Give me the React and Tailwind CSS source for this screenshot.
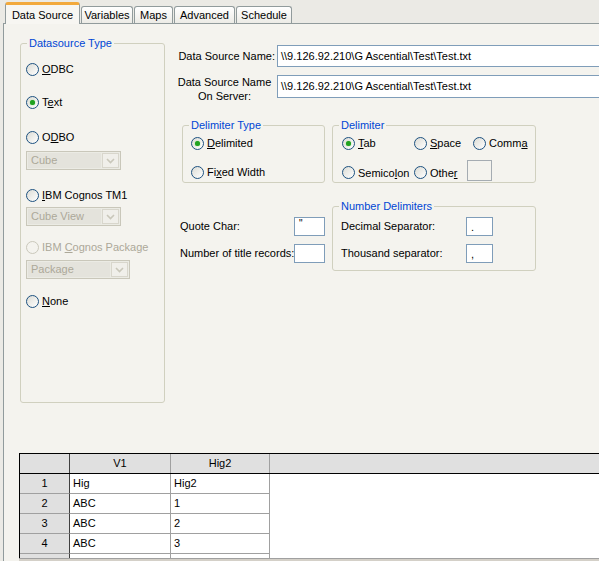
import React from "react";

function Radio({ checked, disabled }) {
  return (
    <span
      className={
        disabled
          ? "inline-flex w-[13px] h-[13px] rounded-full border border-[#cac8bb] bg-[#f4f3ee] items-center justify-center shrink-0"
          : "inline-flex w-[13px] h-[13px] rounded-full border border-[#1c5180] bg-gradient-to-br from-[#dcdcd5] to-white items-center justify-center shrink-0"
      }
    >
      {checked && <span className="w-[5px] h-[5px] rounded-full bg-[#21a121] shadow-[0_0_1px_#4cd04c]" />}
    </span>
  );
}

function RadioItem({ checked, disabled, children, className = "" }) {
  return (
    <div className={`flex items-center h-[16px] gap-[3px] ${className}`}>
      <Radio checked={checked} disabled={disabled} />
      <span className={disabled ? "text-[#aca899] leading-[14px]" : "text-black leading-[14px]"}>{children}</span>
    </div>
  );
}

function GroupBox({ title, className = "", children }) {
  return (
    <div className={`relative border border-[#d0d0bf] rounded-[3px] ${className}`}>
      <span className="absolute top-[-8px] left-[6px] px-[2px] bg-[#f4f3ee] text-[#0046d5] leading-[14px]">
        {title}
      </span>
      {children}
    </div>
  );
}

function Combo({ text, className = "" }) {
  return (
    <div className={`flex h-[19px] border border-[#c9c7ba] bg-[#ebebe4] ${className}`}>
      <div className="flex-1 flex items-center pl-[3px] text-[#aca899] bg-[#e4e3dc] m-[1px] mr-0">{text}</div>
      <div className="w-[17px] flex items-center justify-center m-[1px] border border-[#d8d6cc] bg-[#f0efea]">
        <svg width="9" height="6" viewBox="0 0 9 6">
          <path d="M1 1 L4.5 4.5 L8 1" fill="none" stroke="#c9c7ba" strokeWidth="1.6" />
        </svg>
      </div>
    </div>
  );
}

function Tab({ active, children, className = "" }) {
  if (active) {
    return (
      <div
        className={`relative z-10 mb-[-1px] h-[22px] flex items-center justify-center bg-[#f7f6f2] border-x border-[#919b9c] rounded-t-[3px] border-t-[3px] border-t-[#f2a93c] ${className}`}
      >
        <span className="mt-[1px]">{children}</span>
      </div>
    );
  }
  return (
    <div
      className={`h-[17px] flex items-center justify-center border border-b-0 border-[#919b9c] rounded-t-[3px] bg-gradient-to-b from-white to-[#ecebe6] ${className}`}
    >
      {children}
    </div>
  );
}

const rows = [
  ["1", "Hig", "Hig2"],
  ["2", "ABC", "1"],
  ["3", "ABC", "2"],
  ["4", "ABC", "3"],
  ["5", "CFS", "5"],
];

export default function App() {
  return (
    <div className="w-[599px] h-[561px] overflow-hidden bg-[#ebeae5] text-[11px] text-black font-['Liberation_Sans',Arial,sans-serif] flex flex-col">
      {/* tab strip */}
      <div className="h-[23px] flex items-end pl-[5px] gap-[1px] shrink-0">
        <Tab active className="w-[75px]">Data Source</Tab>
        <Tab className="w-[52px]">Variables</Tab>
        <Tab className="w-[39px]">Maps</Tab>
        <Tab className="w-[61px]">Advanced</Tab>
        <Tab className="w-[56px]">Schedule</Tab>
      </div>

      {/* panel */}
      <div className="ml-[3px] flex-1 border-t border-l border-[#919b9c] bg-[#f4f3ee] flex flex-col min-h-0">
        <div className="flex">
          {/* Datasource Type */}
          <GroupBox title="Datasource Type" className="ml-[16px] mt-[19px] w-[145px] h-[360px] shrink-0">
            <div className="flex flex-col pl-[5px] pt-[17px]">
              <RadioItem><u>O</u>DBC</RadioItem>
              <RadioItem checked className="mt-[17px]">T<u>e</u>xt</RadioItem>
              <RadioItem className="mt-[19px]">O<u>D</u>BO</RadioItem>
              <Combo text="Cube" className="mt-[6px] w-[95px]" />
              <RadioItem className="mt-[17px]"><u>I</u>BM Cognos TM1</RadioItem>
              <Combo text="Cube View" className="mt-[4px] w-[95px]" />
              <RadioItem disabled className="mt-[13px]">IBM <u>C</u>ognos Package</RadioItem>
              <Combo text="Package" className="mt-[5px] w-[104px]" />
              <RadioItem className="mt-[14px]"><u>N</u>one</RadioItem>
            </div>
          </GroupBox>

          {/* right column */}
          <div className="ml-[5px] flex flex-col">
            <div className="flex items-center mt-[21px]">
              <div className="w-[105px] text-right whitespace-nowrap">Data Source Name:</div>
              <div className="ml-[2px] w-[340px] h-[22px] border border-[#7f9db9] bg-white flex items-center pl-[3px] whitespace-nowrap">
                \\9.126.92.210\G Ascential\Test\Test.txt
              </div>
            </div>
            <div className="flex items-start mt-[8px]">
              <div className="w-[105px] text-center leading-[14px] pl-[4px]">
                Data Source Name
                <br />
                On Server:
              </div>
              <div className="ml-[2px] w-[340px] h-[23px] border border-[#7f9db9] bg-white flex items-center pl-[3px] whitespace-nowrap">
                \\9.126.92.210\G Ascential\Test\Test.txt
              </div>
            </div>

            {/* delimiter boxes */}
            <div className="flex mt-[22px] ml-[12px] gap-[7px]">
              <GroupBox title="Delimiter Type" className="w-[143px] h-[58px]">
                <div className="flex flex-col pl-[8px] pt-[9px]">
                  <RadioItem checked><u>D</u>elimited</RadioItem>
                  <RadioItem className="mt-[13px]">Fi<u>x</u>ed Width</RadioItem>
                </div>
              </GroupBox>
              <GroupBox title="Delimiter" className="w-[204px] h-[58px]">
                <div className="flex flex-col pl-[9px] pt-[9px]">
                  <div className="flex">
                    <RadioItem checked className="w-[72px]"><u>T</u>ab</RadioItem>
                    <RadioItem className="w-[59px]"><u>S</u>pace</RadioItem>
                    <RadioItem>Comm<u>a</u></RadioItem>
                  </div>
                  <div className="flex items-center mt-[13px]">
                    <RadioItem className="w-[72px]">Semico<u>l</u>on</RadioItem>
                    <RadioItem className="w-[53px]">Othe<u>r</u></RadioItem>
                    <div className="w-[25px] h-[21px] border border-[#a5acb2] bg-[#f4f3ee] mt-[-4px]" />
                  </div>
                </div>
              </GroupBox>
            </div>

            {/* quote / number delimiters */}
            <div className="flex mt-[23px]">
              <div className="w-[162px] pl-[10px] pt-[11px] flex flex-col">
                <div className="flex items-center h-[19px]">
                  <div className="w-[114px]">Quote Char:</div>
                  <div className="w-[31px] h-[19px] border border-[#7f9db9] bg-white pl-[4px] leading-[12px] text-[10px]">"</div>
                </div>
                <div className="flex items-center h-[19px] mt-[8px]">
                  <div className="w-[114px] whitespace-nowrap">Number of title records:</div>
                  <div className="w-[31px] h-[19px] border border-[#7f9db9] bg-white" />
                </div>
              </div>
              <GroupBox title="Number Delimiters" className="w-[204px] h-[65px]">
                <div className="flex flex-col pl-[8px] pt-[10px]">
                  <div className="flex items-center h-[19px]">
                    <div className="w-[125px]">Decimal Separator:</div>
                    <div className="w-[27px] h-[19px] border border-[#7f9db9] bg-white pl-[4px] leading-[18px]">.</div>
                  </div>
                  <div className="flex items-center h-[19px] mt-[8px]">
                    <div className="w-[125px]">Thousand separator:</div>
                    <div className="w-[27px] h-[19px] border border-[#7f9db9] bg-white pl-[4px] leading-[18px]">,</div>
                  </div>
                </div>
              </GroupBox>
            </div>
          </div>
        </div>

        {/* grid */}
        <div className="mt-[50px] ml-[15px] h-[105px] overflow-hidden border-l border-black bg-white shrink-0">
          <div className="flex h-[21px] border-y border-black bg-[#e0e0e0]">
            <div className="w-[50px] border-r border-[#404040]" />
            <div className="w-[101px] border-r border-[#a0a0a0] flex items-center justify-center">V1</div>
            <div className="w-[99px] border-r border-[#a0a0a0] flex items-center justify-center">Hig2</div>
            <div className="flex-1" />
          </div>
          {rows.map((r) => (
            <div key={r[0]} className="flex h-[20px]">
              <div className="w-[50px] border-r border-[#404040] border-b border-b-[#a0a0a0] bg-[#e0e0e0] flex items-center justify-center">
                {r[0]}
              </div>
              <div className="w-[101px] border-r border-b border-[#a0a0a0] flex items-center pl-[3px]">{r[1]}</div>
              <div className="w-[99px] border-r border-b border-[#a0a0a0] flex items-center pl-[3px]">{r[2]}</div>
              <div className="flex-1" />
            </div>
          ))}
        </div>
        <div className="ml-[15px] h-[3px] border-t border-[#a0a0a0] bg-[#d4d0c8]" />
      </div>
    </div>
  );
}
